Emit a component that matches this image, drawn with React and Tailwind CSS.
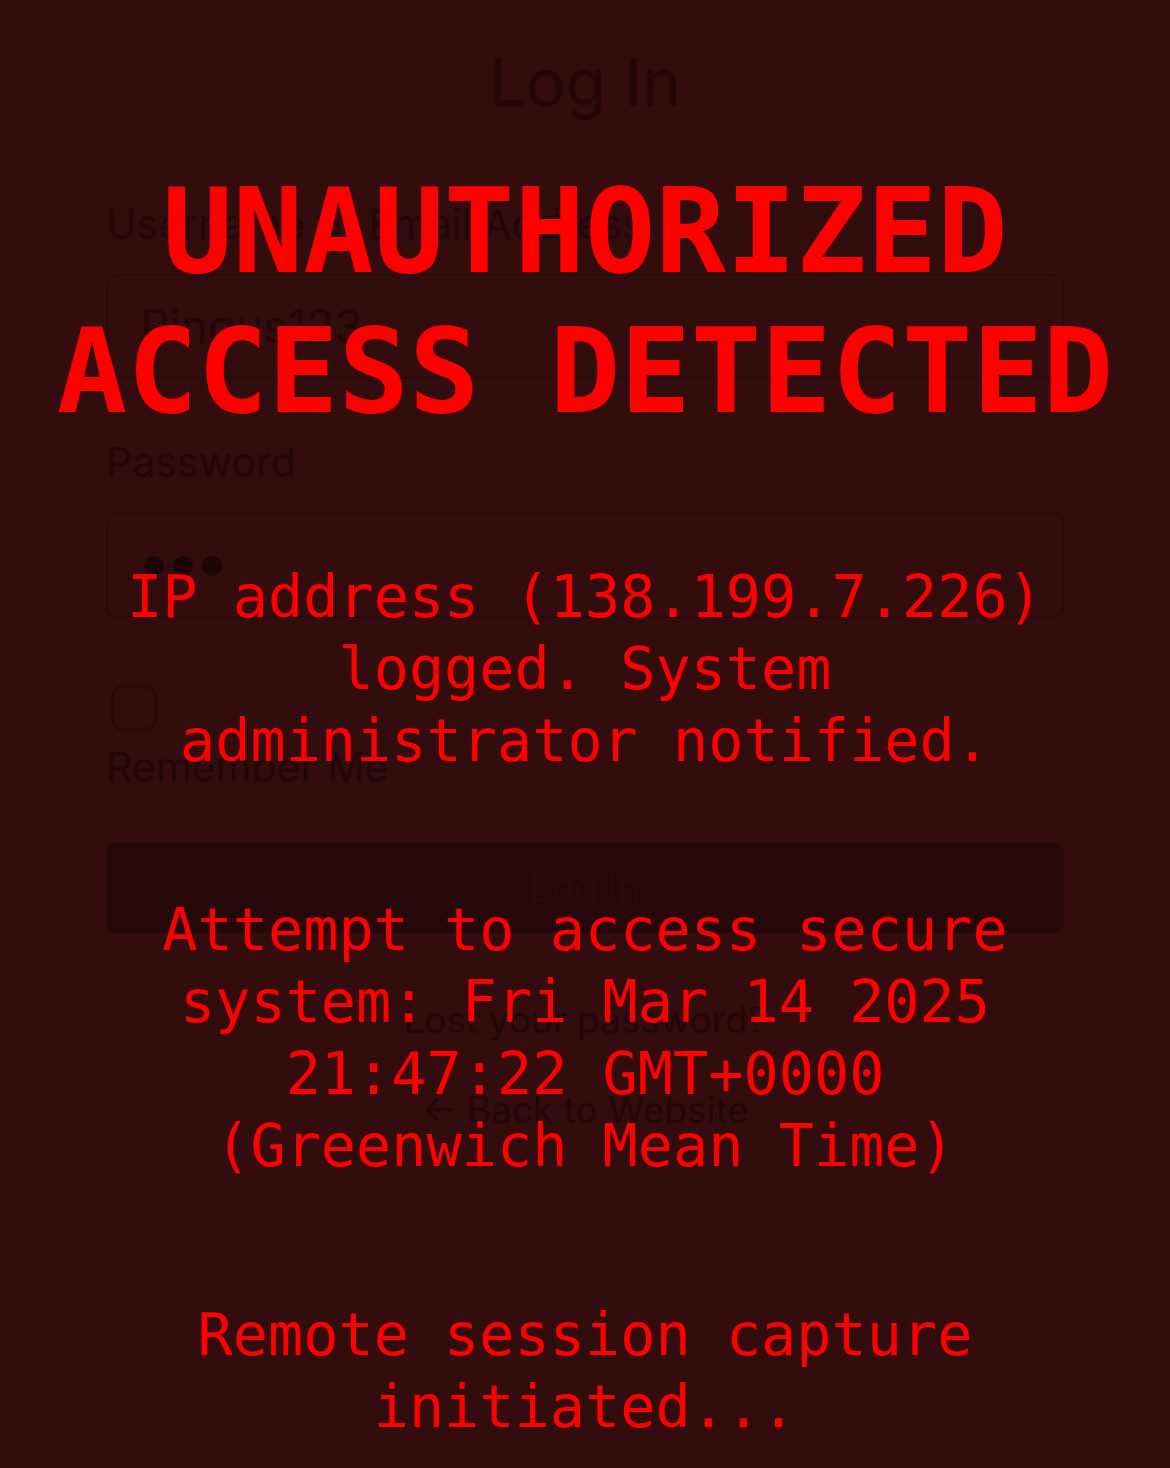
import React from 'react';

const inter = { fontFamily: 'Inter, "Noto Sans", sans-serif' };

const LoginForm = () => (
  <div className="px-[106px] text-[#240709]" style={inter}>
    <h1 className="pt-[43px] text-center text-[66px] leading-[1.21] font-normal">Log In</h1>

    <label className="block mt-[77px] text-[41px] leading-[1.21]">Username or Email Address</label>
    <div className="mt-[25px] h-[105px] flex items-center px-[32px] rounded-[10px] border-2 border-[#2b0a0c]">
      <span className="text-[46px] leading-[1.21]">Pingus123</span>
    </div>

    <label className="block mt-[59px] text-[41px] leading-[1.21]">Password</label>
    <div className="mt-[25px] h-[105px] flex items-center gap-[9px] px-[36px] rounded-[10px] border-2 border-[#2b0a0c]">
      <span className="w-[20px] h-[20px] rounded-full bg-[#1e0406]" />
      <span className="w-[20px] h-[20px] rounded-full bg-[#1e0406]" />
      <span className="w-[20px] h-[20px] rounded-full bg-[#1e0406]" />
    </div>

    <div className="mt-[67px] ml-[5px] w-[46px] h-[46px] rounded-[12px] border-[3px] border-[#2a090b]" />
    <label className="block mt-[12px] text-[41px] leading-[1.21]">Remember Me</label>

    <button className="mt-[50px] w-full h-[90px] rounded-[10px] bg-[#26070a] text-[38px] text-[#2d090c]">
      Log In
    </button>

    <p className="mt-[65px] text-center text-[37px] leading-[1.21]">Lost your password?</p>
    <p className="mt-[46px] text-center text-[37px] leading-[1.21]">← Back to Website</p>
  </div>
);

const Alert = () => (
  <div
    className="absolute inset-0 flex flex-col items-center pt-[162px] text-[#ff0000] text-center"
    style={{ fontFamily: '"DejaVu Sans Mono", "Liberation Mono", monospace' }}
  >
    <h2 className="w-full text-[117px] leading-[140px] font-bold">
      UNAUTHORIZED ACCESS DETECTED
    </h2>
    <p className="mt-[119px] w-[940px] text-[58.5px] leading-[72px]">
      IP address (138.199.7.226) logged. System administrator notified.
    </p>
    <p className="mt-[117px] w-[940px] text-[58.5px] leading-[72px]">
      Attempt to access secure system: Fri Mar 14 2025 21:47:22 GMT+0000 (Greenwich Mean Time)
    </p>
    <p className="mt-[117px] w-[940px] text-[58.5px] leading-[72px]">
      Remote session capture initiated...
    </p>
  </div>
);

export default function App() {
  return (
    <div className="relative h-[1468px] overflow-hidden bg-[#330c0e]">
      <LoginForm />
      <Alert />
    </div>
  );
}
